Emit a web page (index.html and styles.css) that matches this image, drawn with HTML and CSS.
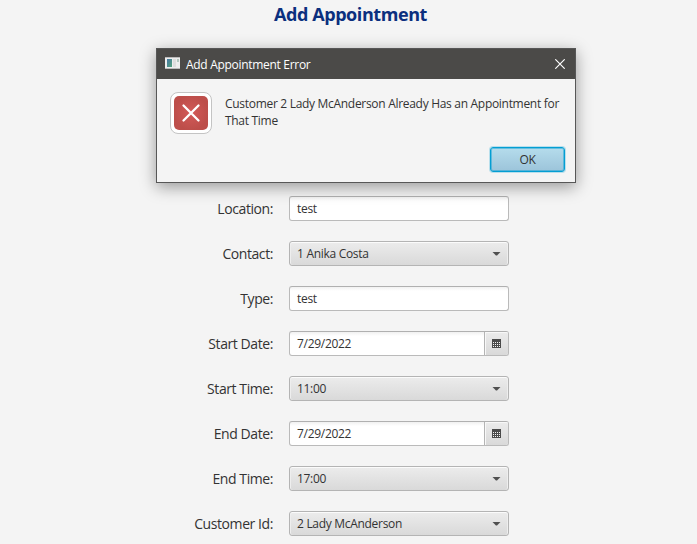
FILE: index.html
```html
<!DOCTYPE html>
<html lang="en">
<head>
<meta charset="utf-8">
<title>Add Appointment</title>
<link rel="stylesheet" href="styles.css">
</head>
<body>
<svg class="defs" width="0" height="0" aria-hidden="true">
  <symbol id="calendar" viewBox="0 0 9 9"><path fill="#4a4a4a" d="M0 0h9v9H0z"/><path stroke="#f4f4f4" stroke-width="1" stroke-dasharray="1 1" d="M1 3.5h7M1 5.5h7M1 7.5h7"/></symbol>
</svg>
<main class="page">
  <h1 class="title"><span>Add Appointment</span></h1>
  <form class="form">
    <div class="row"><span class="label">Location:</span><div class="field">test</div></div>
    <div class="row"><span class="label">Contact:</span><div class="field combo"><span>1 Anika Costa</span><i class="arrow"></i></div></div>
    <div class="row"><span class="label">Type:</span><div class="field">test</div></div>
    <div class="row"><span class="label">Start Date:</span><div class="field date"><span>7/29/2022</span><b class="picker"><svg width="9" height="9"><use href="#calendar"/></svg></b></div></div>
    <div class="row"><span class="label">Start Time:</span><div class="field combo"><span>11:00</span><i class="arrow"></i></div></div>
    <div class="row"><span class="label">End Date:</span><div class="field date"><span>7/29/2022</span><b class="picker"><svg width="9" height="9"><use href="#calendar"/></svg></b></div></div>
    <div class="row"><span class="label">End Time:</span><div class="field combo"><span>17:00</span><i class="arrow"></i></div></div>
    <div class="row"><span class="label">Customer Id:</span><div class="field combo"><span>2 Lady McAnderson</span><i class="arrow"></i></div></div>
  </form>
</main>
<section class="dialog">
  <header class="bar">
    <svg class="app" width="15" height="12" viewBox="0 0 15 12"><defs><linearGradient id="g" x2="1" y2="1"><stop stop-color="#4779a5"/><stop offset="1" stop-color="#55a37c"/></linearGradient></defs><path fill="#eee" d="M0 0h15v12H0z"/><path fill="#bbb" d="M0 0h15v1H0zM0 11h15v1H0z"/><path fill="url(#g)" d="M2 2h5v8H2z"/><path fill="#dedede" d="M8 2h3v8H8z"/><path fill="#b4c8bf" d="M12 2h2v3h-2z"/></svg>
    <span class="caption">Add Appointment Error</span>
    <svg class="close" width="10" height="10" viewBox="0 0 10 10"><path d="M.3.3l9.4 9.4M9.7.3L.3 9.7" stroke="#fff" stroke-width="1.15"/></svg>
  </header>
  <div class="content">
    <div class="error"><svg width="34" height="34" viewBox="0 0 34 34"><defs><radialGradient id="r"><stop stop-color="#d35a58"/><stop offset="1" stop-color="#bd4e4a"/></radialGradient></defs><rect width="34" height="34" rx="5" fill="url(#r)"/><path d="M9.5 9.5l15 15M24.5 9.5l-15 15" stroke="#fff" stroke-width="2.3" stroke-linecap="round"/></svg></div>
    <p class="message"><span class="line1">Customer 2 Lady McAnderson Already Has an Appointment for</span><br>That Time</p>
  </div>
  <footer class="actions"><button class="ok">OK</button></footer>
</section>
</body>
</html>
```
FILE: styles.css
```css
* { box-sizing: border-box; }
body { margin: 0; height: 544px; overflow: hidden; background: #f4f4f4; color: #333; font: 12px "Open Sans", "Noto Sans", sans-serif; letter-spacing: -0.3px; }
.defs { position: absolute; }
.title { margin: 0; padding-left: 4px; height: 30px; line-height: 28px; text-align: center; color: #0b2f7e; font-size: 18px; font-weight: 700; letter-spacing: -0.42px; }
.form { padding-top: 166px; display: flex; flex-direction: column; gap: 20px; }
.row { display: flex; align-items: center; gap: 16px; height: 25px; }
.label { width: 273px; text-align: right; font-size: 14px; line-height: 25px; letter-spacing: -0.42px; }
.field { width: 220px; height: 25px; padding-left: 7px; line-height: 24px; border: 1px solid #bababa; border-top-color: #b0b0b0; border-radius: 3px; background: linear-gradient(#f1f1f1, #fff 4px); display: flex; justify-content: space-between; align-items: center; }
.combo { padding-right: 7px; border-color: #b4b4b4; background: linear-gradient(#ececec, #d9d9d9); box-shadow: inset 0 1px #fbfbfb, inset 1px 0 #eee, inset -1px 0 #eee; }
.arrow { width: 9px; height: 4px; background: #505050; clip-path: polygon(0 0, 100% 0, 56% 100%, 44% 100%); }
.picker { width: 24px; height: 23px; display: flex; align-items: center; justify-content: center; border-left: 1px solid #b4b4b4; border-radius: 0 2px 2px 0; background: linear-gradient(#ececec, #d9d9d9); box-shadow: inset 1px 1px #f8f8f8; }
.dialog { position: absolute; left: 156px; top: 48px; width: 420px; height: 135px; border: 1px solid #575757; background: #f4f4f4; box-shadow: 0 4px 15px rgba(0,0,0,.38); }
.bar { height: 30px; padding: 0 10px 0 8px; display: flex; align-items: center; background: #4b4a48; color: #fff; }
.app { margin-top: -2px; }
.caption { margin-left: 6px; flex: 1; }
.close { margin-top: -1px; }
.content { display: flex; height: 68px; padding: 13px 0 0 13px; gap: 13px; }
.error { width: 42px; height: 42px; padding: 3px; border: 1px solid #c4c4c4; border-radius: 8px; background: #fff; }
.error svg { display: block; }
.message { margin: 3px 0 0; line-height: 17px; white-space: nowrap; }
.actions { display: flex; justify-content: flex-end; padding-right: 10px; }
.ok { width: 75px; height: 25px; padding: 0; border: 1px solid #039ed3; border-radius: 3px; background: linear-gradient(#b5dcec, #9cc4da); box-shadow: 0 0 0 1px rgba(3,158,211,.25), inset 0 0 0 1px rgba(3,158,211,.45); color: #333; font: inherit; letter-spacing: -0.3px; }
```
